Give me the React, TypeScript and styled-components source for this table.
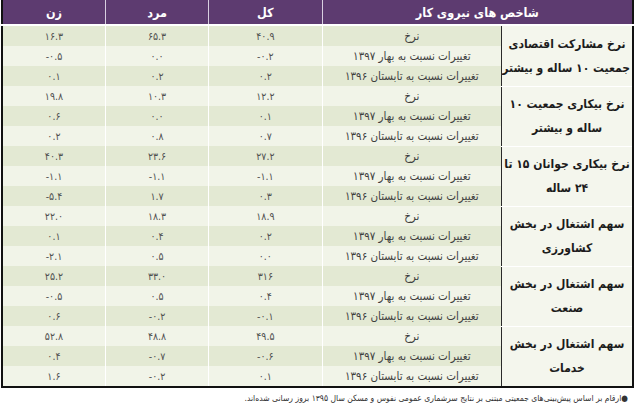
import React from "react";
import styled, { createGlobalStyle } from "styled-components";

type Row = { label: string; total: string; male: string; female: string };
type Group = { title: string[]; rows: Row[] };

const BAHAR = "تغییرات نسبت به بهار ۱۳۹۷";
const TABESTAN = "تغییرات نسبت به تابستان ۱۳۹۶";

const mk = (vals: string[][]): Row[] =>
  ["نرخ", BAHAR, TABESTAN].map((label, i) => ({
    label,
    total: vals[i][0],
    male: vals[i][1],
    female: vals[i][2],
  }));

const groups: Group[] = [
  {
    title: ["نرخ مشارکت اقتصادی", "جمعیت ۱۰ ساله و بیشتر"],
    rows: mk([
      ["۴۰.۹", "۶۵.۳", "۱۶.۳"],
      ["-۰.۲", "۰.۰", "-۰.۵"],
      ["۰.۲", "۰.۲", "۰.۱"],
    ]),
  },
  {
    title: ["نرخ بیکاری جمعیت ۱۰", "ساله و بیشتر"],
    rows: mk([
      ["۱۲.۲", "۱۰.۳", "۱۹.۸"],
      ["۰.۱", "۰.۰", "۰.۶"],
      ["۰.۷", "۰.۸", "۰.۲"],
    ]),
  },
  {
    title: ["نرخ بیکاری جوانان ۱۵ تا", "۲۴ ساله"],
    rows: mk([
      ["۲۷.۲", "۲۳.۶", "۴۰.۳"],
      ["-۱.۱", "-۱.۱", "-۱.۱"],
      ["۰.۳", "۱.۷", "-۵.۴"],
    ]),
  },
  {
    title: ["سهم اشتغال در بخش", "کشاورزی"],
    rows: mk([
      ["۱۸.۹", "۱۸.۳", "۲۲.۰"],
      ["۰.۲", "۰.۴", "۰.۱"],
      ["۰.۰", "۰.۵", "-۲.۱"],
    ]),
  },
  {
    title: ["سهم اشتغال در بخش", "صنعت"],
    rows: mk([
      ["۳۱۶", "۳۳.۰", "۲۵.۲"],
      ["۰.۴", "۰.۵", "-۰.۵"],
      ["-۰.۱", "-۰.۲", "۰.۶"],
    ]),
  },
  {
    title: ["سهم اشتغال در بخش", "خدمات"],
    rows: mk([
      ["۴۹.۵", "۴۸.۸", "۵۲.۸"],
      ["-۰.۶", "-۰.۷", "۰.۴"],
      ["۰.۱", "-۰.۲", "۱.۶"],
    ]),
  },
];

const GlobalStyle = createGlobalStyle`
  body {
    margin: 0;
    background: #ffffff;
    font-family: "DejaVu Sans Condensed", "DejaVu Sans", sans-serif;
  }
`;

const Page = styled.div`
  width: 634px;
  height: 407px;
  display: flex;
  flex-direction: column;
  direction: rtl;
  overflow: hidden;
`;

const Table = styled.table`
  width: 633px;
  border-collapse: collapse;
  table-layout: fixed;
  border-left: 2px solid #111;
  border-right: 2px solid #111;
  border-bottom: 2px solid #111;
`;

const HeadCell = styled.th`
  height: 24px;
  padding: 0;
  background: #5d3b70;
  color: #ffffff;
  font-size: 12.5px;
  font-weight: bold;
  text-align: center;
  border-bottom: 2px solid #ffffff;
  border-left: 1px solid #d8cfe0;
`;

const BodyRow = styled.tr<{ $alt: boolean }>`
  height: 20px;
  background: ${(p) => (p.$alt ? "#f1f4e8" : "#e3e9d3")};
`;

const GroupCell = styled.td`
  padding: 0 2px;
  background: #f4f6ed;
  border-left: 1px solid #2a2a2a;
  border-bottom: 1px solid #ffffff;
  text-align: center;
  vertical-align: middle;
  font-size: 12px;
  font-weight: bold;
  line-height: 24px;
  color: #1c1c1c;
  white-space: nowrap;
  overflow: hidden;
`;

const SubCell = styled.td`
  padding: 0;
  height: 20px;
  text-align: center;
  font-size: 11.5px;
  color: #3f3f3f;
  border-left: 1px solid #ffffff;
  white-space: nowrap;
`;

const NumCell = styled.td`
  padding: 0;
  text-align: center;
  font-size: 10.5px;
  color: #505050;
  border-left: 1px solid #ffffff;
  span {
    direction: ltr;
    unicode-bidi: isolate;
  }
`;

const Note = styled.div`
  padding: 5px 6px 0 0;
  font-size: 8.5px;
  color: #333;
  text-align: right;
  white-space: nowrap;
`;

export default function App() {
  return (
    <Page>
      <GlobalStyle />
      <Table>
        <colgroup>
          <col style={{ width: 131 }} />
          <col style={{ width: 179 }} />
          <col style={{ width: 113 }} />
          <col style={{ width: 103 }} />
          <col style={{ width: 103 }} />
        </colgroup>
        <thead>
          <tr>
            <HeadCell colSpan={2}>شاخص های نیروی کار</HeadCell>
            <HeadCell>کل</HeadCell>
            <HeadCell>مرد</HeadCell>
            <HeadCell>زن</HeadCell>
          </tr>
        </thead>
        <tbody>
          {groups.map((g, gi) =>
            g.rows.map((r, ri) => (
              <BodyRow key={`${gi}-${ri}`} $alt={(gi * 3 + ri) % 2 === 1}>
                {ri === 0 && (
                  <GroupCell rowSpan={3}>
                    {g.title[0]}
                    <br />
                    {g.title[1]}
                  </GroupCell>
                )}
                <SubCell>{r.label}</SubCell>
                <NumCell>
                  <span>{r.total}</span>
                </NumCell>
                <NumCell>
                  <span>{r.male}</span>
                </NumCell>
                <NumCell>
                  <span>{r.female}</span>
                </NumCell>
              </BodyRow>
            ))
          )}
        </tbody>
      </Table>
      <Note>
        ●ارقام بر اساس پیش‌بینی‌های جمعیتی مبتنی بر نتایج سرشماری عمومی نفوس و
        مسکن سال ۱۳۹۵ بروز رسانی شده‌اند.
      </Note>
    </Page>
  );
}
